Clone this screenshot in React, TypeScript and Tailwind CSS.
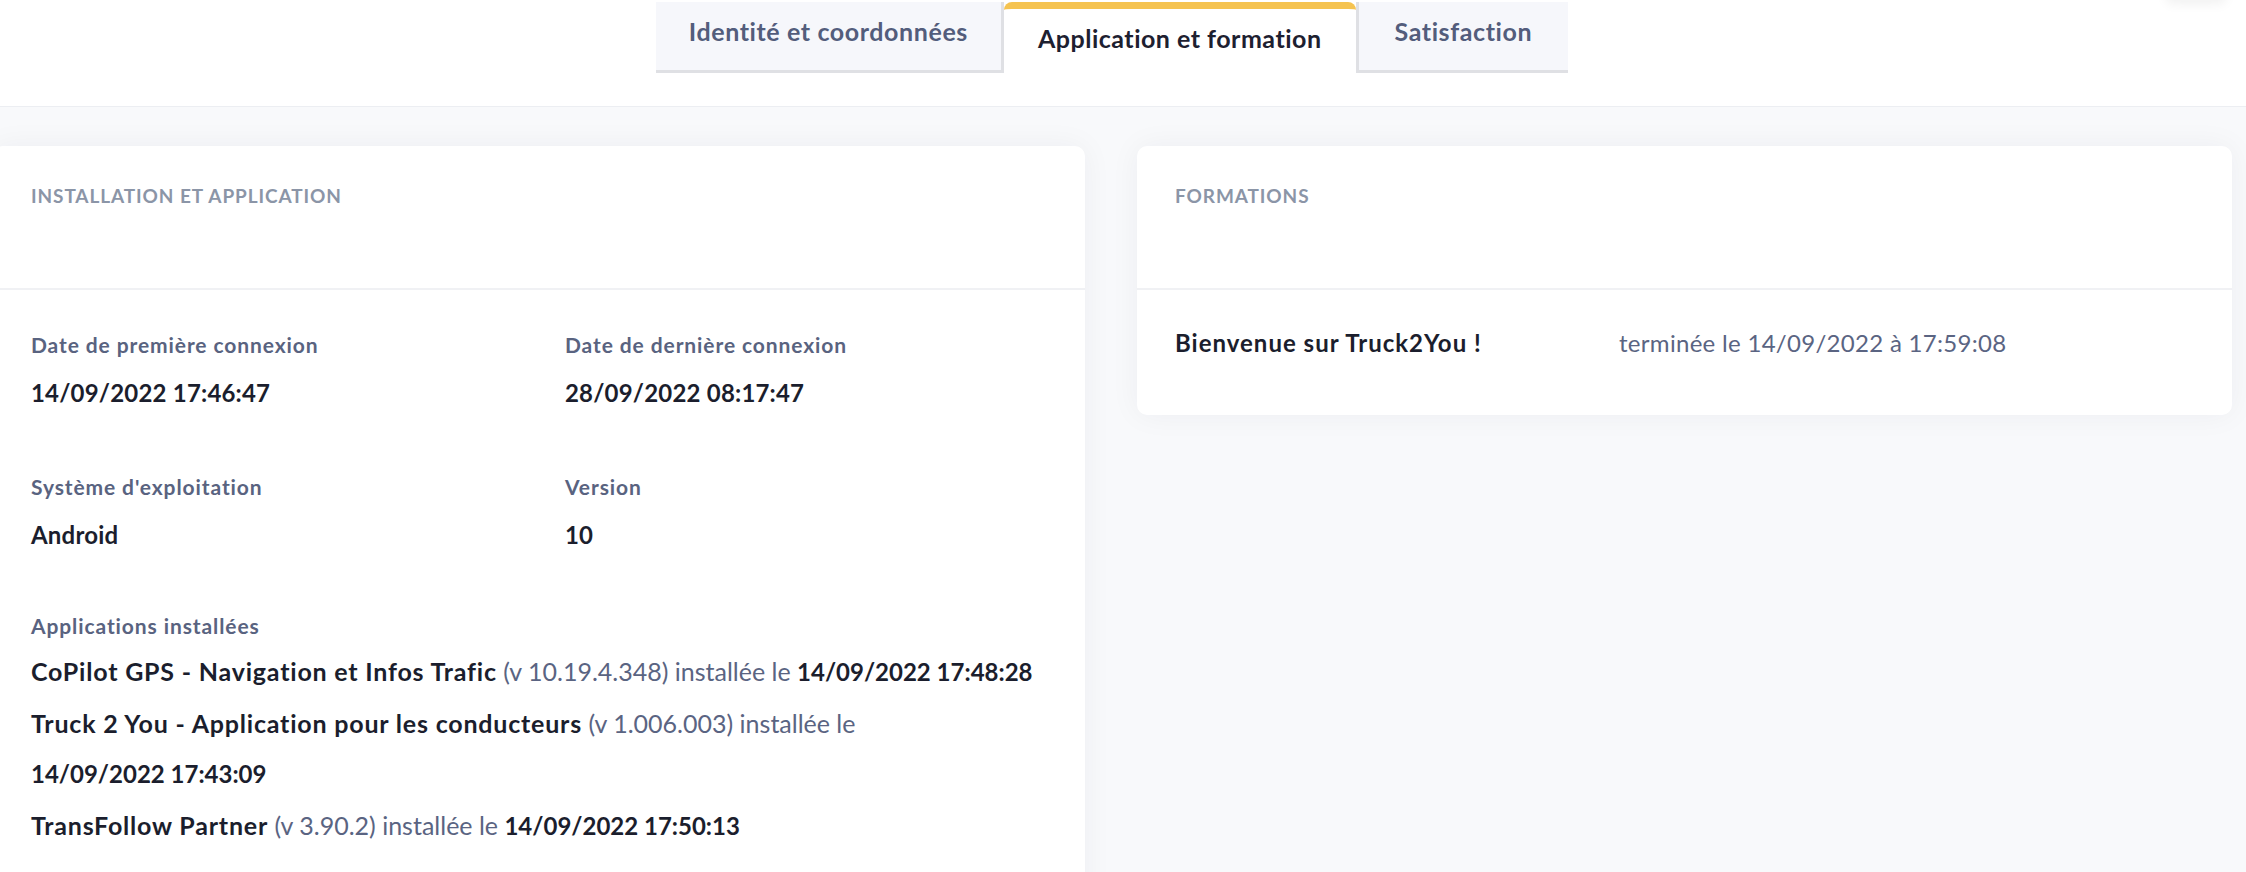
import React from 'react';

type Tab = { label: string; active?: boolean; side?: 'left' | 'right' };

const tabs: Tab[] = [
    { label: 'Identité et coordonnées', side: 'left' },
    { label: 'Application et formation', active: true },
    { label: 'Satisfaction', side: 'right' },
];

const apps = [
    { name: 'CoPilot GPS - Navigation et Infos Trafic', version: '10.19.4.348', date: '14/09/2022 17:48:28' },
    { name: 'Truck 2 You - Application pour les conducteurs', version: '1.006.003', date: '14/09/2022 17:43:09' },
    { name: 'TransFollow Partner', version: '3.90.2', date: '14/09/2022 17:50:13' },
];

const Field: React.FC<{ label: string; value: string }> = ({ label, value }) => (
    <div>
        <div className="text-[21px] leading-[30px] font-bold tracking-[0.9px] text-[#596380]">{label}</div>
        <div className="mt-[18px] text-[24px] leading-[30px] font-bold tracking-[0.2px] text-[#1b1e2d]">{value}</div>
    </div>
);

const CardHeader: React.FC<{ title: string }> = ({ title }) => (
    <div className="h-[144px] border-b-2 border-[#f0f1f4] px-[38px] pt-[38px]">
        <h2 className="text-[19px] leading-[24px] font-bold uppercase tracking-[0.9px] text-[#8b95a7]">{title}</h2>
    </div>
);

export default function App() {
    return (
        <div className="min-h-screen bg-[#f8f9fb] font-['Lato',sans-serif] overflow-hidden">
            <header className="relative h-[107px] bg-white border-b border-[#eceef2]">
                <div className="absolute -top-[40px] right-[20px] h-[40px] w-[60px] rounded-md bg-white shadow-[0_4px_12px_rgba(0,0,0,0.06)]" />
                <nav className="flex justify-center pt-[2px] pr-[22px]">
                    {tabs.map((tab) =>
                        tab.active ? (
                            <div
                                key={tab.label}
                                className="h-[90px] rounded-t-[8px] border-t-[7px] border-[#f5c350] bg-white px-[34px] pt-[12px] text-[25px] leading-[34px] font-bold tracking-[0.5px] text-[#1d2030]"
                            >
                                {tab.label}
                            </div>
                        ) : (
                            <div
                                key={tab.label}
                                className={
                                    'h-[71px] bg-[#f6f7fb] border-b-[3px] border-[#dfe0e4] pt-[12px] text-[25px] leading-[34px] font-bold tracking-[0.6px] text-[#535d7c] ' +
                                    (tab.side === 'left' ? 'border-r-[3px] px-[33px]' : 'border-l-[3px] px-[36px]')
                                }
                            >
                                {tab.label}
                            </div>
                        )
                    )}
                </nav>
            </header>

            <main className="-ml-[7px] pr-[14px] pt-[39px] grid grid-cols-[1092fr_1095fr] gap-[52px] items-start">
                <section className="rounded-[10px] bg-white shadow-[0_0_30px_rgba(20,30,60,0.05)] min-h-[800px]">
                    <CardHeader title="Installation et application" />
                    <div className="px-[38px] pt-[40px] grid grid-cols-2 gap-x-[52px] gap-y-[64px]">
                        <Field label="Date de première connexion" value="14/09/2022 17:46:47" />
                        <Field label="Date de dernière connexion" value="28/09/2022 08:17:47" />
                        <Field label="Système d'exploitation" value="Android" />
                        <Field label="Version" value="10" />
                        <div className="col-span-2 -mt-[3px]">
                            <div className="text-[21px] leading-[30px] font-bold tracking-[0.9px] text-[#596380]">Applications installées</div>
                            <ul className="mt-[5px]">
                                {apps.map((app) => (
                                    <li key={app.name} className="text-[25px] leading-[50.5px] text-[#5a6482]">
                                        <span className="font-bold tracking-[0.8px] text-[#1b1e2d]">{app.name}</span>{' '}
                                        (v {app.version}) installée le{' '}
                                        <span className="text-[24px] font-bold text-[#1b1e2d] whitespace-nowrap">{app.date}</span>
                                    </li>
                                ))}
                            </ul>
                        </div>
                    </div>
                </section>

                <section className="rounded-[10px] bg-white shadow-[0_0_30px_rgba(20,30,60,0.05)]">
                    <CardHeader title="Formations" />
                    <div className="flex items-start px-[38px] pt-[38px] h-[125px]">
                        <div className="w-[444px] text-[24px] leading-[30px] font-bold tracking-[1px] text-[#1b1e2d]">Bienvenue sur Truck2You !</div>
                        <div className="text-[24px] leading-[30px] tracking-[0.3px] text-[#5a6482]">terminée le 14/09/2022 à 17:59:08</div>
                    </div>
                </section>
            </main>
        </div>
    );
}
